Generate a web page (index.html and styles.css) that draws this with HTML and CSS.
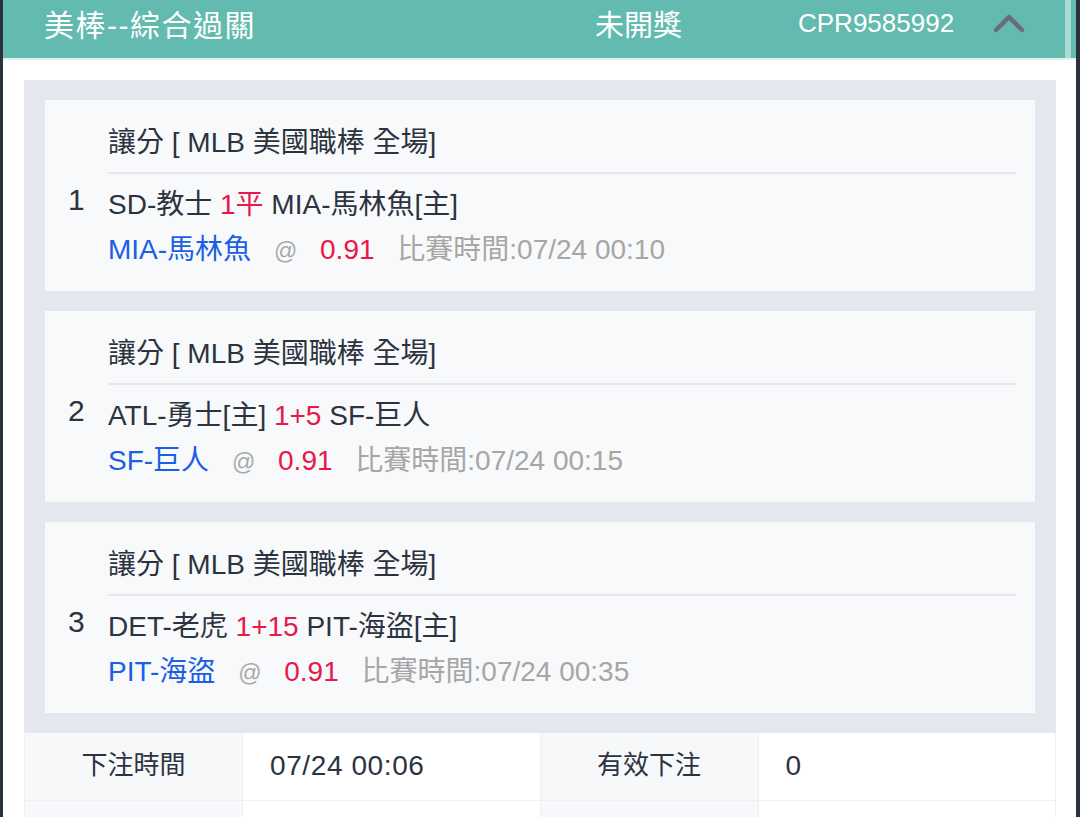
FILE: index.html
```html
<!DOCTYPE html>
<html lang="zh-Hant">
<head>
  <meta charset="UTF-8" />
  <title>注單詳情</title>
  <meta name="viewport" content="width=device-width, initial-scale=1.0">
  <link rel="stylesheet" href="styles.css">
</head>
<body>

<div class="frame">
  <div class="bet-header">
    <span class="bet-type">美棒--綜合過關</span>
    <span class="bet-status">未開獎</span>
    <span class="bet-no">CPR9585992</span>
    <svg class="chevron" width="32" height="20" viewBox="0 0 32 20">
      <polyline points="3,17 16,4 29,17" fill="none" stroke="#6c6c78" stroke-width="4.5" stroke-linecap="round" stroke-linejoin="round" />
    </svg>
  </div>

  <div class="body">
    <div class="legs">
      <div class="leg">
        <div class="leg-no">1</div>
        <div class="leg-info">
          <div class="league">讓分 [ MLB 美國職棒 全場]</div>
          <div class="match">SD-教士 <span class="red">1平</span> MIA-馬林魚[主]</div>
          <div class="pick">
            <span class="blue">MIA-馬林魚</span>
            <span class="at">@</span>
            <span class="red">0.91</span>
            <span class="time">比賽時間:07/24 00:10</span>
          </div>
        </div>
      </div>

      <div class="leg">
        <div class="leg-no">2</div>
        <div class="leg-info">
          <div class="league">讓分 [ MLB 美國職棒 全場]</div>
          <div class="match">ATL-勇士[主] <span class="red">1+5</span> SF-巨人</div>
          <div class="pick">
            <span class="blue">SF-巨人</span>
            <span class="at">@</span>
            <span class="red">0.91</span>
            <span class="time">比賽時間:07/24 00:15</span>
          </div>
        </div>
      </div>

      <div class="leg">
        <div class="leg-no">3</div>
        <div class="leg-info">
          <div class="league">讓分 [ MLB 美國職棒 全場]</div>
          <div class="match">DET-老虎 <span class="red">1+15</span> PIT-海盜[主]</div>
          <div class="pick">
            <span class="blue">PIT-海盜</span>
            <span class="at">@</span>
            <span class="red">0.91</span>
            <span class="time">比賽時間:07/24 00:35</span>
          </div>
        </div>
      </div>
    </div>

    <table class="summary">
      <tr>
        <th>下注時間</th>
        <td>07/24 00:06</td>
        <th>有效下注</th>
        <td>0</td>
      </tr>
      <tr>
        <th>&nbsp;</th>
        <td></td>
        <th></th>
        <td></td>
      </tr>
    </table>
  </div>
</div>

</body>
</html>
```

FILE: styles.css
```css
body {
  margin: 0;
  background: #29313c;
  font-family: "Liberation Sans", "Noto Sans CJK TC", sans-serif;
  color: #2c3340;
  overflow: hidden;
}
.frame {
  margin: 0 4px 0 3px;
  background: white;
  height: 817px;
  overflow: hidden;
}
.bet-header {
  display: grid;
  grid-template-columns: 551px 203px 195px 32px;
  align-items: center;
  height: 60px;
  padding: 0 0 12px 41px;
  box-sizing: border-box;
  background: linear-gradient(to right, #63bbb0 calc(100% - 11px), #a9dbd4 calc(100% - 11px), #a9dbd4 calc(100% - 5px), #63bbb0 calc(100% - 5px));
  border-bottom: 2px solid #dff1ee;
  color: white;
  font-size: 29px;
}
.bet-type {
  font-size: 30px;
  letter-spacing: 1.5px;
}
.bet-no {
  font-size: 26px;
}
.chevron {
  display: block;
}
.body {
  padding: 20px 20px 0 21px;
}
.legs {
  background: #e5e7ef;
  padding: 20px 21px 20px;
  display: flex;
  flex-direction: column;
  gap: 20px;
}
.leg {
  display: flex;
  align-items: center;
  background: #f8f9fa;
  padding: 25px 19px 22px 23px;
}
.leg-no {
  width: 40px;
  font-size: 30px;
  padding-top: 6px;
}
.leg-info {
  flex: 1;
  font-size: 28px;
  line-height: 36px;
}
.league {
  padding-bottom: 11px;
  border-bottom: 2px solid #e6e8ec;
  margin-bottom: 13px;
}
.match {
  margin-bottom: 9px;
}
.pick span {
  margin-right: 15px;
}
.red {
  color: #e8184a;
}
.blue {
  color: #1a5fe4;
}
.at {
  color: #a8a8a8;
  font-size: 23px;
}
.time {
  color: #a6a6a6;
}
.summary {
  width: 100%;
  table-layout: fixed;
  border-collapse: collapse;
}
.summary tr {
  height: 67px;
}
.summary th, .summary td {
  border: 1px solid #eef0f3;
  padding: 0;
  font-weight: normal;
}
.summary tr:first-child th, .summary tr:first-child td {
  border-top: none;
}
.summary th {
  width: 217px;
  background: #f7f8fa;
  text-align: center;
  font-size: 26px;
  padding-bottom: 8px;
}
.summary td {
  padding-left: 27px;
  text-align: left;
  font-size: 28px;
  letter-spacing: 0.6px;
}
```
